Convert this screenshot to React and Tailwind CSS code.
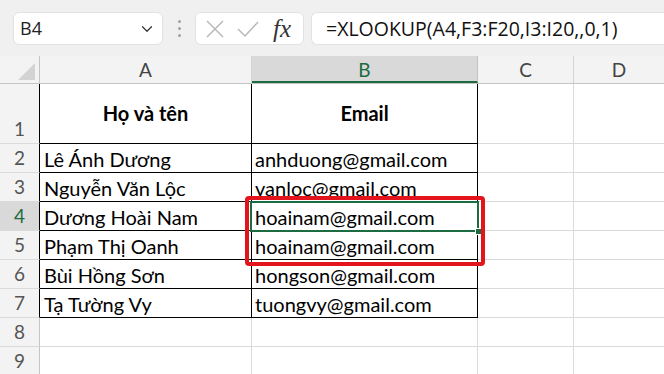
import { ChevronDown } from 'lucide-react';

const ROWS = [
  { n: 1, a: 'Họ và tên', b: 'Email', head: true },
  { n: 2, a: 'Lê Ánh Dương', b: 'anhduong@gmail.com' },
  { n: 3, a: 'Nguyễn Văn Lộc', b: 'vanloc@gmail.com' },
  { n: 4, a: 'Dương Hoài Nam', b: 'hoainam@gmail.com', active: true },
  { n: 5, a: 'Phạm Thị Oanh', b: 'hoainam@gmail.com' },
  { n: 6, a: 'Bùi Hồng Sơn', b: 'hongson@gmail.com' },
  { n: 7, a: 'Tạ Tường Vy', b: 'tuongvy@gmail.com' },
  { n: 8, a: '', b: '' },
  { n: 9, a: '', b: '' },
];

function Row({ row }) {
  const inTable = row.n <= 7;
  const edge = inTable ? 'border-black' : 'border-[#dadada]';
  return (
    <div className={`flex ${row.head ? 'h-[60px]' : 'h-[29px]'}`}>
      <div
        className={`flex w-[40px] shrink-0 items-end justify-center border-b border-r border-b-[#dadada] pb-[2px] text-[19px] leading-[24px] ${
          inTable ? 'border-r-black' : 'border-r-[#c4c4c4]'
        } ${row.active ? 'bg-[#d9d9d9] text-[#1d6b40]' : 'bg-[#f3f3f3] text-[#555]'}`}
      >
        {row.n}
      </div>
      <div
        className={`flex w-[212px] shrink-0 border-b border-r ${edge} ${
          row.head ? 'items-center justify-center pb-[2px] font-bold' : 'items-end pb-[1px] pl-[4px]'
        } text-[20px] leading-[24px] text-black`}
      >
        {row.a}
      </div>
      <div
        className={`flex w-[226px] shrink-0 border-b border-r ${edge} ${
          row.head ? 'items-center justify-center pb-[2px] font-bold' : 'items-end pb-[1px] pl-[3px]'
        } text-[20px] leading-[24px] text-black`}
      >
        {row.b}
      </div>
      <div className="w-[96px] shrink-0 border-b border-r border-[#dadada]" />
      <div className="flex-1 border-b border-[#dadada]" />
    </div>
  );
}

export default function App() {
  return (
    <div className="relative h-[374px] w-[664px] overflow-hidden bg-white font-['Lato',sans-serif]">
      {/* ribbon / formula bar */}
      <div className="flex h-[56px] items-start bg-[#f0f0f0] pt-[12px]">
        <div className="ml-[13px] flex h-[33px] w-[150px] items-center justify-between rounded-[6px] border border-[#e2e2e2] bg-white pl-[6px] pr-[6px] font-['Open_Sans',sans-serif] text-[18px] text-[#222]">
          <span>B4</span>
          <ChevronDown size={18} strokeWidth={1.6} className="text-[#333]" />
        </div>
        <div className="ml-[13px] flex h-[33px] w-[6px] flex-col items-center justify-center gap-[4px]">
          <span className="h-[3px] w-[3px] rounded-full bg-[#a0a0a0]" />
          <span className="h-[3px] w-[3px] rounded-full bg-[#a0a0a0]" />
          <span className="h-[3px] w-[3px] rounded-full bg-[#a0a0a0]" />
        </div>
        <div className="ml-[13px] flex h-[33px] w-[109px] items-center rounded-[6px] border border-[#e2e2e2] bg-white pl-[9px]">
          <svg width="20" height="20" viewBox="0 0 20 20" fill="none" stroke="#b9b9b9" strokeWidth="1.5">
            <path d="M2 2 L18 18 M18 2 L2 18" />
          </svg>
          <svg className="ml-[12px]" width="22" height="18" viewBox="0 0 22 18" fill="none" stroke="#b9b9b9" strokeWidth="1.5">
            <path d="M1 9 L8 16 L21 2" />
          </svg>
          <span className="ml-[14px] font-['Liberation_Serif',serif] text-[25px] italic leading-none text-[#333]">
            fx
          </span>
        </div>
        <div className="ml-[7px] flex h-[33px] flex-1 items-center rounded-l-[6px] border border-r-0 border-[#e2e2e2] bg-white pl-[14px] font-['Open_Sans',sans-serif] text-[19.5px] text-[#111]">
          =XLOOKUP(A4,F3:F20,I3:I20,,0,1)
        </div>
      </div>

      {/* column headers */}
      <div className="flex h-[28px] border-b border-[#c4c4c4] bg-[#f3f3f3] text-[19px] leading-[27px] text-[#444]">
        <div className="relative w-[40px] shrink-0 border-r border-[#c4c4c4]">
          <div className="absolute bottom-[3px] right-[4px] h-0 w-0 border-b-[17px] border-l-[17px] border-b-[#d3d3d3] border-l-transparent" />
        </div>
        <div className="w-[212px] shrink-0 border-r border-[#d4d4d4] text-center">A</div>
        <div className="w-[226px] shrink-0 border-b-2 border-r border-b-[#1d6b40] border-r-[#c4c4c4] bg-[#d9d9d9] text-center text-[#1d6b40]">
          B
        </div>
        <div className="w-[96px] shrink-0 border-r border-[#d4d4d4] text-center">C</div>
        <div className="flex-1 text-center">D</div>
      </div>

      {ROWS.map((r) => (
        <Row key={r.n} row={r} />
      ))}

      {/* active cell B4 */}
      <div className="absolute left-[250px] top-[201px] h-[31px] w-[229px] border-2 border-[#1d6b40]">
        <div className="absolute bottom-[-5px] right-[-5px] h-[7px] w-[7px] border border-white bg-[#1d6b40]" />
      </div>

      {/* red annotation */}
      <div className="absolute left-[245px] top-[196px] h-[70px] w-[240px] rounded-[4px] border-[4px] border-[#e3141b]" />
    </div>
  );
}
